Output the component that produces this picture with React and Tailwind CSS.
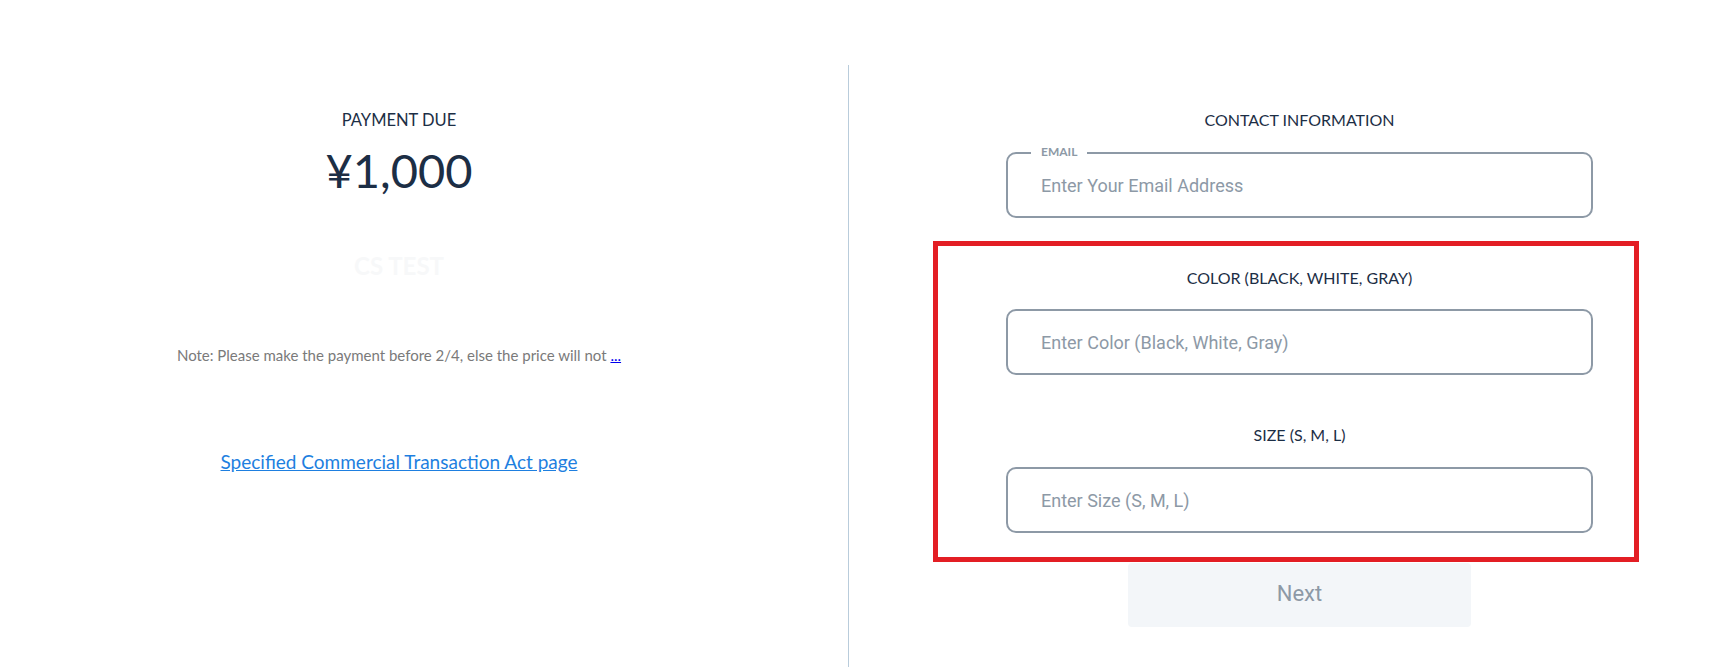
import React from "react";

const label = "font-['Lato','Noto_Sans',sans-serif]";
const roboto = "font-['Roboto','Liberation_Sans',sans-serif]";

function Field({ placeholder }) {
  return (
    <div className="h-[66px] w-full rounded-[10px] border-2 border-[#8d99a6] flex items-center">
      <input
        className={`${roboto} w-full bg-transparent pl-[33px] pr-4 text-[18px] text-[#1c2e45] outline-none placeholder:text-[#8d99a6]`}
        placeholder={placeholder}
      />
    </div>
  );
}

export default function App() {
  return (
    <div className="w-[1714px] h-[667px] bg-white flex overflow-hidden">
      {/* Left */}
      <div className={`${label} w-[798px] flex flex-col items-center pt-[108px] text-[#1c2e45]`}>
        <div className="text-[16.5px] leading-[24px]">PAYMENT DUE</div>
        <div className="mt-[14px] text-[47px] leading-[48px]">¥1,000</div>
        <div className="mt-[56px] text-[24px] leading-[32px] font-bold text-[#f7f8f9]">CS TEST</div>
        <div className="mt-[63px] text-[15px] leading-[20px] text-[#7a7a7a]">
          Note: Please make the payment before 2/4, else the price will not{" "}
          <a href="#" className="text-[#0000ee] underline">...</a>
        </div>
        <a href="#" className="mt-[83px] text-[19px] leading-[28px] text-[#1e7fe0] underline">
          Specified Commercial Transaction Act page
        </a>
      </div>

      {/* Divider */}
      <div className="ml-[50px] mt-[65px] w-px self-stretch bg-[#b9ccdb]" />

      {/* Right */}
      <div className="flex-1 pl-[157px] pt-[108px]">
        <div className="w-[587px] flex flex-col items-center">
          <div className={`${label} text-[16px] leading-[24px] text-[#1c2e45]`}>CONTACT INFORMATION</div>

          <div className="relative mt-[20px] w-full">
            <Field placeholder="Enter Your Email Address" />
            <span className={`${label} absolute -top-[8px] left-[25px] bg-white px-[10px] text-[12px] leading-[15px] font-bold text-[#8d99a6]`}>
              EMAIL
            </span>
          </div>

          <div className="relative mt-[48px] w-full flex flex-col items-center">
            <div className="absolute -top-[25px] -left-[73px] w-[706px] h-[321px] border-[5px] border-[#e31e24] pointer-events-none" />
            <div className={`${label} text-[16px] leading-[24px] text-[#1c2e45]`}>COLOR (BLACK, WHITE, GRAY)</div>
            <div className="mt-[19px] w-full">
              <Field placeholder="Enter Color (Black, White, Gray)" />
            </div>
            <div className={`${label} mt-[48px] text-[16px] leading-[24px] text-[#1c2e45]`}>SIZE (S, M, L)</div>
            <div className="mt-[20px] w-full">
              <Field placeholder="Enter Size (S, M, L)" />
            </div>
          </div>

          <button className={`${roboto} mt-[30px] h-[64px] w-[343px] rounded-[4px] bg-[#f3f6f9] pb-[4px] text-[22px] text-[#8d99a6]`}>
            Next
          </button>
        </div>
      </div>
    </div>
  );
}
